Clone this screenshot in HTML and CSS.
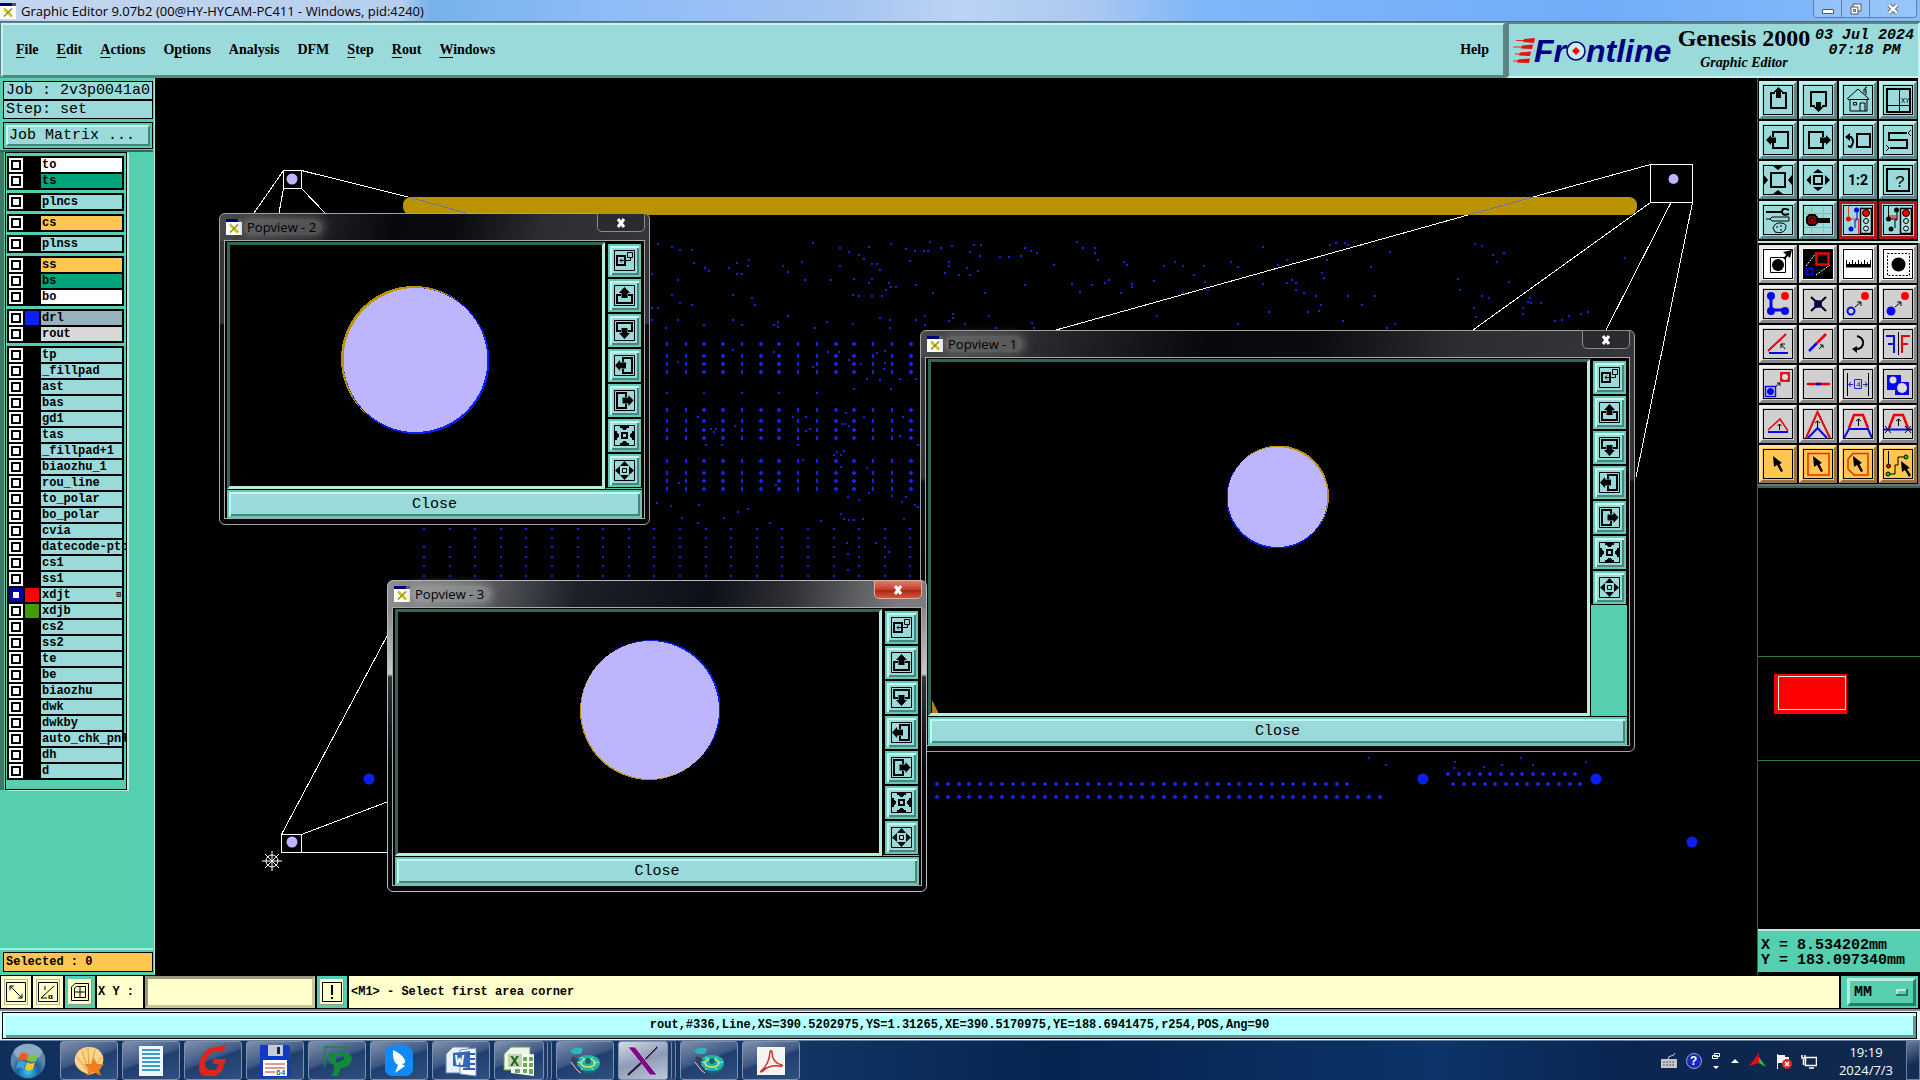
FILE: index.html
```html
<!DOCTYPE html>
<html lang="en">
<head>
    <meta charset="UTF-8">
    <meta name="viewport" content="width=device-width, initial-scale=1.0">
    <title>Graphic Editor</title>
    <link rel="stylesheet" href="styles.css">
</head>
<body>
    <!-- shared icons -->
    <svg class="sprite" aria-hidden="true">
        <symbol id="i-x11" viewBox="0 0 16 16">
            <path d="M0 0H16V16H0Z" fill="#fff"/><path d="M0 0H12V3H0Z" fill="#00007c"/><path d="M12 0H16V3H12Z" fill="#556"/>
            <path d="M4 5.500L12 13.500" stroke="#c9c400" stroke-width="2.500"/><path d="M12 5.500L4 13.500" stroke="#8c8a20" stroke-width="1.500"/>
        </symbol>
        <symbol id="p-link" viewBox="0 0 21 21">
            <path d="M.5 .5H20.500V20.500H.5Z" fill="none" stroke="#000"/>
            <path d="M3 6H11V15H3Z" fill="none" stroke="#000" stroke-width="2"/>
            <path d="M13.500 2.500H18.500V7.500H13.500ZM16.500 7.500V10.500H6M8 8.500L6 10.500L8 12.500" fill="none" stroke="#000"/>
        </symbol>
        <symbol id="p-up" viewBox="0 0 21 21">
            <path d="M.5 .5H20.500V20.500H.5Z" fill="none" stroke="#000"/>
            <path d="M7 10H3V18H18V10H14" fill="none" stroke="#000" stroke-width="2"/>
            <path d="M10.500 2L16 8H13.500V13H7.500V8H5Z"/>
        </symbol>
        <symbol id="p-down" viewBox="0 0 21 21">
            <path d="M.5 .5H20.500V20.500H.5Z" fill="none" stroke="#000"/>
            <path d="M7 11H3V3H18V11H14" fill="none" stroke="#000" stroke-width="2"/>
            <path d="M10.500 19L16 13H13.500V8H7.500V13H5Z"/>
        </symbol>
        <symbol id="p-left" viewBox="0 0 21 21">
            <path d="M.5 .5H20.500V20.500H.5Z" fill="none" stroke="#000"/>
            <path d="M9 7V3H18V18H9V14" fill="none" stroke="#000" stroke-width="2"/>
            <path d="M1 10.500L6 5V7.500H12V13.500H6V16Z"/>
        </symbol>
        <symbol id="p-right" viewBox="0 0 21 21">
            <path d="M.5 .5H20.500V20.500H.5Z" fill="none" stroke="#000"/>
            <path d="M12 7V3H3V18H12V14" fill="none" stroke="#000" stroke-width="2"/>
            <path d="M19.500 10.500L14.500 5V7.500H8.500V13.500H14.500V16Z"/>
        </symbol>
        <symbol id="p-in" viewBox="0 0 21 21">
            <path d="M.5 .5H20.500V20.500H.5Z" fill="none" stroke="#000"/>
            <path d="M8 8H13V13H8Z" fill="none" stroke="#000" stroke-width="2"/>
            <path d="M6 1H15V3H13V4H12V5H9V4H8V3H6ZM6 20H15V18H13V17H12V16H9V17H8V18H6ZM1 6V15H3V13H4V12H5V9H4V8H3V6ZM20 6V15H18V13H17V12H16V9H17V8H18V6Z"/>
        </symbol>
        <symbol id="p-out" viewBox="0 0 21 21">
            <path d="M.5 .5H20.500V20.500H.5Z" fill="none" stroke="#000"/>
            <path d="M8.500 8.500H12.500V12.500H8.500Z" fill="none" stroke="#000"/>
            <path d="M10.500 1L15 6H6ZM10.500 20L15 15H6ZM1 10.500L6 6V15ZM20 10.500L15 6V15Z"/>
        </symbol>
        <symbol id="t-cam" viewBox="0 0 32 32">
            <ellipse cx="19" cy="20" rx="12" ry="9" fill="#126a6c"/><ellipse cx="19" cy="18" rx="12" ry="8" fill="#1fb3ab"/>
            <path d="M1 6Q7 0 14 4L12 9H4Z" fill="#29b6bd"/><path d="M3 11L10 14L8 20L16 28L8 26L2 18Z" fill="#38405e"/>
            <path d="M2 17L8 25L12 28" stroke="#d8dce8" fill="none"/>
            <ellipse cx="19" cy="18" rx="7" ry="4" fill="none" stroke="#e8e060" stroke-width="1.500"/><ellipse cx="19" cy="16" rx="3" ry="3" fill="#0b6f70"/>
            <path d="M8 17L13 18M24 18L30 17M14 23L12 25M22 23L25 25M12 12L15 14M24 12L22 14" stroke="#8ff0e0"/>
        </symbol>
    </svg>

    <div class="titlebar">
        <svg class="app-icon"><use href="#i-x11"/></svg>
        <span class="title-text">Graphic Editor 9.07b2 (00@HY-HYCAM-PC411 - Windows, pid:4240)</span>
        <div class="win-buttons">
            <button aria-label="Minimize"><svg width="14" height="14"><path d="M1.500 7.500H12.500V11.500H1.500Z" fill="#fff" stroke="#556"/></svg></button>
            <button aria-label="Restore"><svg width="14" height="14"><path d="M4 2H12V9H4Z" fill="#fff" stroke="#556"/><path d="M2 5H9V12H2Z" fill="#fff" stroke="#556"/><path d="M4.500 7.500H6.500V9.500H4.500Z" stroke="#556" fill="none"/></svg></button>
            <button class="wide" aria-label="Close"><svg width="14" height="14"><path d="M3 3L11 11M11 3L3 11" stroke="#556" stroke-width="4.500"/><path d="M3 3L11 11M11 3L3 11" stroke="#fff" stroke-width="2.500"/></svg></button>
        </div>
    </div>

    <header class="header">
        <nav class="menubar">
            <a href="#"><u>F</u>ile</a>
            <a href="#"><u>E</u>dit</a>
            <a href="#"><u>A</u>ctions</a>
            <a href="#">O<u>p</u>tions</a>
            <a href="#">Analysis</a>
            <a href="#">DFM</a>
            <a href="#"><u>S</u>tep</a>
            <a href="#"><u>R</u>out</a>
            <a href="#"><u>W</u>indows</a>
            <a href="#" class="help">Help</a>
        </nav>
        <div class="brand">
            <div class="logo">
                <svg width="24" height="26" viewBox="0 0 24 26"><path d="M3 2.500H16M0 9H14M2 16H13M0 23H12" stroke="#e22" stroke-width="1"/><path d="M11 1L22 0L21 5L10 4ZM9 7.500L20 6.500L19 11L8 10.500ZM7 14.500L18 13.500L17 18L6 17.500ZM5 21.500L17 20.500L16 25L4 24.500Z" fill="#e81010"/></svg>
                <span class="logo-text">Fr<svg width="20" height="20" viewBox="0 0 20 20"><circle cx="10" cy="10" r="9" fill="#c8eef0" stroke="#000080" stroke-width="1.500"/><path d="M10 6L14 10L10 14L6 10Z" fill="#f00"/></svg>ntline</span>
            </div>
            <div class="product">
                <div class="product-name">Genesis 2000</div>
                <div class="product-sub">Graphic Editor</div>
            </div>
            <div class="clock">03 Jul 2024<br>07:18 PM</div>
        </div>
    </header>

    <main class="main">
        <aside class="sidebar">
            <div class="info">Job : 2v3p0041a0</div>
            <div class="info">Step: set</div>
            <div class="matrix"><button>Job Matrix ...</button></div>
            <div class="layer-panel">
                <div class="layers" id="layers"></div>
            </div>
            <div class="selected">Selected : 0</div>
        </aside>

        <section class="canvas">
            <svg class="scene" viewBox="155 78 1602 897" preserveAspectRatio="xMinYMin meet">
                <g id="drills" fill="#1322e4" shape-rendering="crispEdges"></g>
                <rect x="403" y="197" width="1234" height="18" rx="8" fill="#b99400"/>
                <g fill="none" stroke="#fff" shape-rendering="crispEdges">
                    <path d="M283.500 170.500H301.500V188.500H283.500ZM283.500 170.500L254 213M283.500 188.500L279 213M301.500 188.500L325 213M301.500 170.500L408 197"/>
                    <path d="M1650.500 164.500H1692.500V202.500H1650.500ZM1650.500 164.500L1533 197M1468 215L1056 330M1650.500 202.500L1473 330M1671 202.500L1606 330M1692.500 202.500L1636 477"/>
                    <path d="M281.500 834.500H301.500V852.500H281.500ZM281.500 834.500L387 636M301.500 834.500L387 802M301.500 852.500H387"/>
                    <path d="M408 197L466 213M1533 197L1468 215" stroke="#6d75a0"/>
                </g>
                <g fill="none" stroke="#fff"><circle cx="272" cy="861" r="6"/><path d="M262 861H282M272 851V871M265 854L279 868M279 854L265 868"/></g>
                <g fill="#bdb6ff"><circle cx="292" cy="179" r="5.500"/><circle cx="1673.500" cy="179" r="5"/><circle cx="292" cy="842" r="5.500"/></g>
                <g fill="#0a20f0"><circle cx="369" cy="779" r="5.500"/><circle cx="1423" cy="779" r="5.500"/><circle cx="1596" cy="779" r="5.500"/><circle cx="1692" cy="842" r="5.500"/></g>
            </svg>

            <div class="popview popview-1">
                <div class="pop-title"><svg class="app-icon"><use href="#i-x11"/></svg><span>Popview - 1</span><button class="pop-x" aria-label="Close window"><svg width="12" height="12"><path d="M3 2L9 10M9 2L3 10" stroke="#fff" stroke-width="3"/></svg></button></div>
                <div class="pop-body">
                    <svg class="view" shape-rendering="crispEdges"><circle cx="347.500" cy="134" r="50.500" fill="#b99400"/><circle cx="346" cy="136" r="50.500" fill="#0a20f0"/><circle cx="346.500" cy="135" r="50" fill="#bdb6ff"/><path d="M1 338L8 352H1Z" fill="#b07f10"/></svg>
                    <div class="pop-tools"></div>
                    <button class="pop-close">Close</button>
                </div>
            </div>

            <div class="popview popview-2">
                <div class="pop-title"><svg class="app-icon"><use href="#i-x11"/></svg><span>Popview - 2</span><button class="pop-x" aria-label="Close window"><svg width="12" height="12"><path d="M3 2L9 10M9 2L3 10" stroke="#fff" stroke-width="3"/></svg></button></div>
                <div class="pop-body">
                    <svg class="view" shape-rendering="crispEdges"><circle cx="184" cy="114" r="73" fill="#b99400"/><circle cx="186.500" cy="116" r="73" fill="#0a20f0"/><circle cx="185.500" cy="115" r="72" fill="#bdb6ff"/></svg>
                    <div class="pop-tools"></div>
                    <button class="pop-close">Close</button>
                </div>
            </div>

            <div class="popview popview-3">
                <div class="pop-title"><svg class="app-icon"><use href="#i-x11"/></svg><span>Popview - 3</span><button class="pop-x" aria-label="Close window"><svg width="12" height="12"><path d="M3 2L9 10M9 2L3 10" stroke="#fff" stroke-width="3"/></svg></button></div>
                <div class="pop-body">
                    <svg class="view" shape-rendering="crispEdges"><circle cx="251" cy="99" r="69" fill="#b99400"/><circle cx="253.500" cy="97" r="69" fill="#0a20f0"/><circle cx="252" cy="98" r="69" fill="#bdb6ff"/></svg>
                    <div class="pop-tools"></div>
                    <button class="pop-close">Close</button>
                </div>
            </div>
        </section>

        <aside class="tools">
            <div class="tool-grid view-tools">
                <button aria-label="Pan up"><svg viewBox="0 0 30 30"><path d="M12 8H8V23H23V8H19" class="s2"/><path d="M15.500 2L20.500 7H18V13H13V7H10.500Z"/></svg></button>
                <button aria-label="Pan down"><svg viewBox="0 0 30 30"><path d="M12 21H8V7H23V21H19" class="s2"/><path d="M15.500 27L20.500 22H18V17H13V22H10.500Z"/></svg></button>
                <button aria-label="Home"><svg viewBox="0 0 30 30"><path d="M4 14L15 4L26 14M7 14.500V26H24V14.500M5 14.500H26M10.500 17.500H13.500V20H10.500ZM17 26V18H22V26M21 8V4H23V10M22 3L24 2" class="s1"/></svg></button>
                <button aria-label="Coordinates"><svg viewBox="0 0 30 30"><path d="M4 4H27V27H4Z" class="s2"/><path d="M16.500 4V27M4 20.500H27" class="s1"/><text x="18" y="18" font-size="7">XY</text></svg></button>
                <button aria-label="Pan left"><svg viewBox="0 0 30 30"><path d="M10 12V7H25V23H10V18" class="s2"/><path d="M3 15L8 10V12.500H13V18H8V20Z"/></svg></button>
                <button aria-label="Pan right"><svg viewBox="0 0 30 30"><path d="M20 12V7H6V23H20V18" class="s2"/><path d="M28 15L23 10V12.500H17V18H23V20Z"/></svg></button>
                <button aria-label="Previous view"><svg viewBox="0 0 30 30"><path d="M14 9H27V22H14ZM5 12H8Q12 16 8 22L5 21" class="s2"/><path d="M2 12L7 8V16Z"/></svg></button>
                <button aria-label="Serpentine"><svg viewBox="0 0 30 30"><path d="M24 8H6V15H24V23H7" class="s2"/><path d="M28 5L25 8L28 11M3 20L6 23L3 26" class="s1"/></svg></button>
                <button aria-label="Zoom in"><svg viewBox="0 0 30 30"><path d="M8 8H22V22H8Z" class="s2"/><path d="M10 1H20L15 5ZM10 29H20L15 25ZM1 10V20L5 15ZM29 10V20L25 15Z"/></svg></button>
                <button aria-label="Zoom out"><svg viewBox="0 0 30 30"><path d="M11 11H19V19H11Z" class="s2"/><path d="M15 4L20 8H10ZM15 26L20 22H10ZM3.500 15L8 10V20ZM27 15L22 10V20Z"/></svg></button>
                <button aria-label="Scale 1 to 2"><svg viewBox="0 0 30 30"><text x="5" y="20" font-size="14" font-weight="bold" font-family="Roboto">1:2</text></svg></button>
                <button aria-label="Query"><svg viewBox="0 0 30 30"><path d="M4 4H26V26H4Z" class="s2"/><text x="12" y="22" font-size="17">?</text></svg></button>
                <button aria-label="Settings"><svg viewBox="0 0 30 30"><path d="M3 7H18M26 5Q19 2 19 7Q19 11 26 9" class="s2"/><path d="M3 14H7L9 12H26V16H9L7 14M10 23Q12 17 19 18Q25 19 22 25Q19 29 12 27ZM14 21V23M18 20V22M17 25H19" class="s1"/></svg></button>
                <button aria-label="Probe"><svg viewBox="0 0 30 30"><path d="M8.500 2V28M20.500 2V28M1 8.500H29M1 22.500H29" stroke="#c5a0a0"/><path d="M3 12L6 9H12L15 12V13H27V18H15L12 21H6L3 18Z"/><path d="M6 12H12V18H6Z" fill="none" stroke="#f00"/><path d="M8 14H10V16H8Z" fill="#f00"/></svg></button>
                <button class="alert" aria-label="Net check"><svg viewBox="0 0 30 30"><path d="M5.500 1V14H15.500V29" fill="none" stroke="#f03030"/><path d="M14 5V15H12V23" fill="none" stroke="#0000e0"/><circle cx="5.500" cy="14" r="2.500" fill="#e00"/><circle cx="13.500" cy="5" r="2.500" fill="#0000e8"/><circle cx="8" cy="24" r="2.500" fill="#0000e8"/><path d="M17.500 3.500H28.500V28.500H17.500Z" fill="#b8e0e0" stroke="#000" stroke-width="1.500"/><circle cx="23" cy="8" r="3.500" fill="#e00" stroke="#000"/><circle cx="23" cy="16" r="2.500" class="s1"/><circle cx="23" cy="23.500" r="2.500" class="s1"/></svg></button>
                <button class="alert" aria-label="Short check"><svg viewBox="0 0 30 30"><path d="M5.500 1V14M14 5V15H12V23M4 14H14" class="s1"/><path d="M7 14V10M9 14V10M11 14V10M13 14V10" stroke="#e00"/><circle cx="5.500" cy="14" r="2.500"/><circle cx="13.500" cy="5" r="2.500"/><circle cx="8" cy="24" r="2.500"/><path d="M17.500 3.500H28.500V28.500H17.500Z" fill="#b8e0e0" stroke="#000" stroke-width="1.500"/><circle cx="23" cy="8" r="3.500" fill="#e00" stroke="#000"/><circle cx="23" cy="16" r="2.500" class="s1"/><circle cx="23" cy="23.500" r="2.500" class="s1"/></svg></button>
            </div>
            <div class="tool-grid edit-tools">
                <button class="white" aria-label="Move pad"><svg viewBox="0 0 30 30"><path d="M7.500 8.500H22.500V23.500H7.500Z" class="s1"/><circle cx="15" cy="16" r="6"/><path d="M21 10L26 4" class="s2"/><path d="M20 3L29 1L27 9Z"/></svg></button>
                <button class="white" aria-label="Popview"><svg viewBox="0 0 30 30"><path d="M0 0H30V30H0Z"/><path d="M3 17L13 4M13 26L27 16" stroke="#fff" stroke-dasharray="2 1"/><path d="M13.500 4.500H25.500V15.500H13.500Z" fill="none" stroke="#e00" stroke-width="2.500"/><path d="M3.500 19.500H9.500V25.500H3.500Z" fill="none" stroke="#00e" stroke-width="2"/></svg></button>
                <button class="white" aria-label="Measure"><svg viewBox="0 0 30 30"><path d="M3 18.500H28V11H27V15H25V13H24V15H22V11H21V15H19V13H18V15H16V11H15V15H13V13H12V15H10V11H9V15H7V13H6V15H4V11H3Z"/></svg></button>
                <button class="white" aria-label="Select area"><svg viewBox="0 0 30 30"><path d="M4.500 4.500H26.500V26.500H4.500Z" class="s1" stroke-dasharray="2 1.500"/><circle cx="15.500" cy="15.500" r="7"/></svg></button>

                <button aria-label="Connect"><svg viewBox="0 0 30 30"><path d="M8 7V21H22" fill="none" stroke="#0808f0" stroke-width="3"/><circle cx="8" cy="7" r="4" fill="#0808f0"/><circle cx="8" cy="22" r="4" fill="#0808f0"/><circle cx="22" cy="22" r="4" fill="#0808f0"/><circle cx="22" cy="7" r="4" fill="#f00"/></svg></button>
                <button aria-label="Delete"><svg viewBox="0 0 30 30"><circle cx="15" cy="15" r="4" fill="#0808c0"/><path d="M8 8L23 22M23 8L8 22" class="s2"/></svg></button>
                <button aria-label="Move hollow"><svg viewBox="0 0 30 30"><circle cx="8" cy="22" r="3.500" fill="none" stroke="#0808f0" stroke-width="2"/><circle cx="22" cy="7" r="4" fill="#f00"/><path d="M12 18L18 13M14 13H18V17" class="s1"/></svg></button>
                <button aria-label="Move"><svg viewBox="0 0 30 30"><circle cx="8" cy="22" r="4.500" fill="#0808f0"/><circle cx="22" cy="7" r="4" fill="#f00"/><path d="M12 18L18 13M14 13H18V17" class="s1"/></svg></button>

                <button aria-label="Angle"><svg viewBox="0 0 30 30"><path d="M5 22L23 5" stroke="#e00" stroke-width="2"/><path d="M6 24H25" stroke="#0808f0" stroke-width="2"/><path d="M22 20L18 15M18 19V15H22" class="s1"/></svg></button>
                <button aria-label="Split"><svg viewBox="0 0 30 30"><path d="M6 22L14 14" stroke="#0808f0" stroke-width="2.500"/><path d="M14 14L23 5" stroke="#e00" stroke-width="2.500"/><path d="M16 20L20 16M17 16H20V19" class="s1"/></svg></button>
                <button aria-label="Rotate"><svg viewBox="0 0 30 30"><path d="M14 7Q21 9 20 15Q19 20 13 20" class="s2"/><path d="M9 20L14 17V24Z"/></svg></button>
                <button aria-label="Mirror"><svg viewBox="0 0 30 30"><path d="M3 7H11V24M5 15H11" fill="none" stroke="#0808f0" stroke-width="2"/><path d="M27 7H19V24M25 15H19" fill="none" stroke="#e00" stroke-width="2"/><path d="M15.500 3V26" class="s1"/></svg></button>

                <button aria-label="Copy pad"><svg viewBox="0 0 30 30"><path d="M2.500 17.500H12.500V27.500H2.500Z" fill="none" stroke="#0808f0" stroke-width="1.500"/><circle cx="7.500" cy="22.500" r="3.500" fill="#0808f0"/><path d="M17 3H27V13H17Z" fill="#f01010"/><circle cx="22" cy="8" r="3" fill="#ddd"/><path d="M12 18L17 14M14 14H17V17" class="s1"/></svg></button>
                <button aria-label="Join"><svg viewBox="0 0 30 30"><path d="M5 15H26" stroke="#e00" stroke-width="2.500" stroke-linecap="round"/><path d="M13 15H18" stroke="#0808c0" stroke-width="2.500"/></svg></button>
                <button aria-label="Spacing"><svg viewBox="0 0 30 30"><path d="M4.500 4V27M25.500 4V27" class="s1"/><path d="M6 15.500H10M20 15.500H24M8 13L5.500 15.500L8 18M22 13L24.500 15.500L22 18M11.500 10.500H18.500V19.500H11.500Z" fill="none" stroke="#2020d0"/><text x="13" y="18" font-size="8" fill="#2020d0">4</text></svg></button>
                <button aria-label="Merge"><svg viewBox="0 0 30 30"><path d="M4 6H18V13H26V26H12V21H4Z" fill="#0808f0"/><circle cx="10" cy="11" r="3.500" fill="#ddd"/><circle cx="19" cy="19" r="5" fill="#ddd"/></svg></button>

                <button aria-label="Chamfer"><svg viewBox="0 0 30 30"><path d="M5 21L17 10L25 22" fill="none" stroke="#e00" stroke-width="1.500"/><path d="M5 23H25" stroke="#0808f0" stroke-width="2"/><path d="M16.500 21V15M14.500 17L16.500 15L18.500 17" class="s1"/></svg></button>
                <button aria-label="Stretch corner"><svg viewBox="0 0 30 30"><path d="M3 29L14.500 3L27 29" fill="none" stroke="#e00" stroke-width="2"/><path d="M5 29L14.500 19L24 29" fill="none" stroke="#0808f0" stroke-width="2"/><path d="M14.500 18V12M12 14L14.500 12L17 14" class="s1"/></svg></button>
                <button aria-label="Stretch side"><svg viewBox="0 0 30 30"><path d="M6 19L11 6H20L25 19" fill="none" stroke="#e00" stroke-width="2.500"/><path d="M1 29L6 20H25L29 29" fill="none" stroke="#0808f0" stroke-width="2"/><path d="M15.500 17V10M13 12L15.500 10L18 12" class="s1"/></svg></button>
                <button aria-label="Slide side"><svg viewBox="0 0 30 30"><path d="M6 19L11 6H20L25 19" fill="none" stroke="#e00" stroke-width="2.500"/><path d="M1 20.500H29" stroke="#0808f0" stroke-width="2"/><path d="M15.500 17V10M13 12L15.500 10L18 12M2 17L8 24M8 17L2 24M22 17L28 24M28 17L22 24" class="s1"/></svg></button>

                <button class="orange" aria-label="Select"><svg viewBox="0 0 30 30"><path d="M10 7L19 14L16.500 15L20 22L18 23L14 16L11 18Z"/></svg></button>
                <button class="orange" aria-label="Select in box"><svg viewBox="0 0 30 30"><path d="M5 4.500H26V26H5Z" fill="none" stroke="#f02a00" stroke-width="1.500"/><path d="M10 7L19 14L16.500 15L20 22L18 23L14 16L11 18Z"/></svg></button>
                <button class="orange" aria-label="Select in polygon"><svg viewBox="0 0 30 30"><path d="M10 4.500H25V26H11L5 20V10Z" fill="none" stroke="#f02a00" stroke-width="1.500"/><path d="M10 7L19 14L16.500 15L20 22L18 23L14 16L11 18Z"/></svg></button>
                <button class="orange" aria-label="Select net"><svg viewBox="0 0 30 30"><path d="M5.500 2V17M5 25H12V16H15V8H23" class="s1"/><circle cx="5.500" cy="17" r="2" fill="#c22000" stroke="#000"/><circle cx="5" cy="25" r="2" fill="#20d020" stroke="#000"/><circle cx="23" cy="8" r="2" fill="#20d020" stroke="#000"/><path d="M18 12L27 19L24 20L28 26L26 28L22 21L19 23Z"/></svg></button>
            </div>
            <div class="overview">
                <div class="overview-frame">
                    <svg width="80" height="60"><path d="M3 5H76V45H3Z" fill="#f00"/><path d="M7.500 7.500H74.500V40.500H7.500Z" fill="none" stroke="#c8f4f0"/></svg>
                </div>
            </div>
            <div class="coords">X = 8.534202mm<br>Y = 183.097340mm</div>
        </aside>
    </main>

    <div class="command">
        <button aria-label="Absolute"><svg width="20" height="20"><path d="M.5 .5H19.500V19.500H.5ZM4 4L16 16M4 8V4H8M12 16H16V12" class="s1"/></svg></button>
        <button aria-label="Angle lock"><svg width="20" height="20"><path d="M.5 .5H19.500V19.500H.5ZM3 16L16 4M3 16H9M7 4V8" class="s1"/><text x="10" y="17" font-size="8">α</text></svg></button>
        <button class="teal" aria-label="Grid"><svg width="20" height="20"><path d="M1.500 5L5 1.500H18.500V18.500H1.500ZM4.500 6L6.500 4.500H15.500V15.500H4.500ZM10 4V16M4 10H16" class="s1"/></svg></button>
        <label for="xy">X Y :</label>
        <input id="xy" type="text">
        <button class="teal" aria-label="Apply"><svg width="20" height="20"><path d="M.5 .5H19.500V19.500H.5Z" class="s1"/><path d="M10 3V13M10 15V17" class="s2"/></svg></button>
        <div class="message">&lt;M1&gt; - Select first area corner</div>
        <div class="units"><select aria-label="Units"><option>MM</option><option>INCH</option></select></div>
    </div>

    <div class="status"><div class="status-text">rout,#336,Line,XS=390.5202975,YS=1.31265,XE=390.5170975,YE=188.6941475,r254,POS,Ang=90</div></div>

    <footer class="taskbar">
        <button class="start" aria-label="Start"><svg width="38" height="38" viewBox="0 0 38 38"><defs><radialGradient id="orb" cx=".5" cy=".8"><stop offset="0" stop-color="#39c7f5"/><stop offset=".6" stop-color="#1c5f9c"/><stop offset="1" stop-color="#5b87a8"/></radialGradient></defs><circle cx="19" cy="19" r="18" fill="url(#orb)" stroke="#0a2848"/><ellipse cx="19" cy="10" rx="14" ry="8" fill="#fff" opacity=".3"/><path d="M11 12Q15 9 19 12L17 19Q13 16 9 19Z" fill="#ee5a28"/><path d="M20 12Q24 15 29 12L27 19Q23 21 18 19Z" fill="#7cc142"/><path d="M9 20Q13 17 17 20L15 27Q11 24 7 27Z" fill="#38a2e0"/><path d="M18 20Q22 23 26 20L24 27Q20 30 16 27Z" fill="#fcc81f"/></svg></button>
        <button class="task" aria-label="Shell"><svg viewBox="0 0 32 32"><path d="M16 30L8 26Q0 20 2 12Q5 3 14 2Q26 1 30 11Q32 20 24 27Z" fill="#fbd48a"/><path d="M16 28L4 12M16 28L9 6M16 28L15 3M16 28L22 5M16 28L29 12" stroke="#e0a040"/><path d="M21 13L24 19L31 19L26 24L28 31L21 27L14 31L16 24L11 19L18 19Z" fill="#ee7d1c"/></svg></button>
        <button class="task" aria-label="Notepad"><svg viewBox="0 0 32 32"><path d="M4 1H28V31H4Z" fill="#eef8fc"/><path d="M7 5H25M7 9H25M7 13H25M7 17H25M7 21H25M7 25H25" stroke="#3a9bc8" stroke-width="2"/></svg></button>
        <button class="task" aria-label="Gerber tool"><svg viewBox="0 0 32 32"><path d="M29 0L26 7H16Q9 11 8 19Q8 25 14 25H19L22 19H15L17 14H29L25 26L19 31H8Q2 30 2 23Q3 8 13 3Z" fill="#e02418"/></svg></button>
        <button class="task" aria-label="Total Commander"><svg viewBox="0 0 32 32"><path d="M1 0H29L31 2V32H1Z" fill="#1238c8"/><path d="M9 0H24V11H9Z" fill="#c4ccd8"/><path d="M18 2H21V9H18Z" fill="#223"/><path d="M4 15H28V31H4Z" fill="#fff"/><path d="M6 19H26M6 23H26M6 27H16" stroke="#c03030"/><text x="17" y="30" font-size="8" fill="#222">64</text></svg></button>
        <button class="task" aria-label="Pads"><svg viewBox="0 0 32 32"><path d="M4 22V2H25V6" fill="none" stroke="#118a3c" stroke-width="1.500"/><path d="M8 18V8Q30 5 31 13Q31 22 20 23L17 31H10Q14 26 13 20ZM15 11V17Q24 16 23 12Q21 10 15 11Z" fill="#118a3c" fill-rule="evenodd"/></svg></button>
        <button class="task" aria-label="Dingtalk"><svg viewBox="0 0 32 32"><rect x="2" y="1" width="28" height="30" rx="7" fill="#118af5"/><path d="M10 5Q23 11 22 18L19 19L22 21L12 28L15 20Q9 17 10 5Z" fill="#fff"/></svg></button>
        <button class="task" aria-label="Word"><svg viewBox="0 0 32 32"><path d="M8 2H24V28H1V9Z" fill="#e9f0fb" stroke="#5884c0"/><path d="M15 5L31 3V31L15 29Z" fill="#fff" stroke="#7090c0"/><path d="M25 9H30M25 14H30M25 19H30M18 24H30" stroke="#2f60a8" stroke-width="2"/><path d="M8 8L25 6V23L8 21Z" fill="#3565b4"/><text x="10" y="20" font-size="15" font-weight="bold" fill="#fff">W</text></svg></button>
        <button class="task stacked" aria-label="Excel"><svg viewBox="0 0 32 32"><path d="M8 2H27V25H1V9Z" fill="#edf6e8" stroke="#5c9c4a"/><path d="M8 11L31 9V31L8 28Z" fill="#fff"/><path d="M20 12H24V16H20ZM26 12H30V16H26ZM20 18H24V22H20ZM26 18H30V22H26ZM12 24H17V28H12ZM20 24H24V28H20ZM26 24H30V29H26Z" fill="#6cab50"/><path d="M5 9H19V22H5Z" fill="#b9d9a8"/><text x="7" y="21" font-size="15" font-weight="bold" fill="#205c20">X</text></svg></button>
        <button class="task" aria-label="Genesis"><svg viewBox="0 0 32 32"><use href="#t-cam"/></svg></button>
        <button class="task stacked active" aria-label="X server"><svg viewBox="0 0 32 32"><path d="M1 2H8L30 30H23Z" fill="#7d0a84" stroke="#fff" stroke-width=".5"/><path d="M30 2L18 14M14 18L1 30" stroke="#2a1030" stroke-width="2"/><path d="M29 2L17 14" stroke="#fff" stroke-width=".7"/></svg></button>
        <button class="task" aria-label="Genesis"><svg viewBox="0 0 32 32"><use href="#t-cam"/></svg></button>
        <button class="task" aria-label="Acrobat"><svg viewBox="0 0 32 32"><path d="M2 2H30V30H2Z" fill="#f6f4f2"/><path d="M6 26Q14 20 15 7Q16 4 17 7Q17 18 27 20Q28 22 24 21Q14 20 8 26Q5 28 6 26Z" fill="none" stroke="#d0302a" stroke-width="1.500"/></svg></button>

        <div class="tray">
            <svg width="16" height="16"><path d="M0 6H16V15H0Z" fill="#c4c8cc"/><path d="M2 9H14M2 12H14" stroke="#556" stroke-dasharray="2 1"/><path d="M7 6Q7 3 10 3Q13 3 14 0" fill="none" stroke="#ccc"/></svg>
            <svg width="16" height="16"><circle cx="8" cy="8" r="7.500" fill="#1528b8" stroke="#9aa6c8"/><text x="4" y="12" font-size="12" font-weight="bold" fill="#fff">?</text></svg>
            <svg width="10" height="20"><path d="M3.500 2.500H8.500V5.500H3.500ZM1.500 4.500H6.500V7.500H1.500Z" fill="none" stroke="#fff"/><path d="M2 15H8L5 18Z" fill="#fff"/></svg>
            <svg width="10" height="16"><path d="M1 10H9L5 6Z" fill="#fff"/></svg>
            <svg width="18" height="16"><path d="M0 13L10 0V10Z" fill="#e01010"/><path d="M10 4L17 14L10 10Z" fill="#20c040"/></svg>
            <svg width="16" height="16"><path d="M1.500 1V16" stroke="#fff"/><path d="M2 2H9V4H13V10H2Z" fill="#f4f4f4"/><circle cx="11" cy="11" r="5" fill="#e02828"/><path d="M9 9L13 13M13 9L9 13" stroke="#fff" stroke-width="1.500"/></svg>
            <svg width="16" height="16"><path d="M4.500 4.500H15.500V12.500H4.500ZM8 15H13M1 2V5H4V2M2.500 6V12" fill="none" stroke="#fff" stroke-width="1.500"/></svg>
            <div class="tray-clock">19:19<br>2024/7/3</div>
        </div>
        <button class="show-desktop" aria-label="Show desktop"></button>
    </footer>

    <script src="script.js"></script>
</body>
</html>
```

FILE: styles.css
```css
* {
    box-sizing: border-box;
}
body {
    margin: 0;
    min-height: 100vh;
    display: flex;
    flex-direction: column;
    background: #000;
    color: #000;
    font-family: "Liberation Mono", monospace;
    overflow: hidden;
}
button {
    padding: 0;
    margin: 0;
    color: inherit;
    font: inherit;
}
svg {
    display: block;
}
.sprite {
    position: absolute;
    width: 0;
    height: 0;
}
.s1 {
    fill: none;
    stroke: #000;
}
.s2 {
    fill: none;
    stroke: #000;
    stroke-width: 2;
}
.app-icon {
    width: 16px;
    height: 16px;
    flex: none;
}

/* window title */
.titlebar {
    height: 22px;
    display: flex;
    align-items: center;
    gap: 5px;
    border-bottom: 1px solid #4e6c80;
    background:
        radial-gradient(ellipse at 440px 12px, #3f9a9a 0, transparent 14px),
        radial-gradient(ellipse at 480px 12px, #55a0b0 0, transparent 14px),
        radial-gradient(ellipse at 530px 12px, #7ab4d0 0, transparent 12px),
        linear-gradient(90deg, #c3d6ee 0, #b6cfee 400px, #78b2ea 430px, #8fbcf8 620px, #a3c4f0 840px, #bcd4f4 960px, #aac8f0 1090px, #7fb6f8 1200px, #6fadf8 1600px, #88bcf8 100%);
    font: 13px/18px "Open Sans", sans-serif;
}
.win-buttons {
    margin-left: auto;
    margin-right: 3px;
    align-self: flex-start;
    display: flex;
    height: 18px;
    border: 1px solid #5a7fae;
    border-top: 0;
    border-radius: 0 0 4px 4px;
}
.win-buttons button {
    width: 28px;
    border: 0;
    border-right: 1px solid #5a7fae;
    background: rgba(255, 255, 255, 0.15);
    display: grid;
    place-items: center;
}
.win-buttons .wide {
    width: 46px;
    border-right: 0;
}

/* menu and brand */
.header {
    height: 56px;
    display: flex;
    background: #9adada;
}
.menubar {
    flex: 1;
    display: flex;
    align-items: center;
    gap: 18px;
    padding: 0 14px 0 13px;
    border: 3px solid;
    border-color: #c8f0f0 #5c8484 #5c8484 #c8f0f0;
    outline: 1px solid #5c8484;
    outline-offset: -1px;
    font: bold 14px "Liberation Serif", serif;
}
.menubar a {
    color: #000;
    text-decoration: none;
}
.menubar u {
    text-underline-offset: 3px;
}
.menubar .help {
    margin-left: auto;
}
.brand {
    width: 414px;
    display: flex;
    padding: 1px 2px 0 4px;
    border: 2px solid;
    border-color: #5c8484 #c8f0f0 #c8f0f0 #5c8484;
    border-left: 3px solid #5c8484;
}
.logo {
    display: flex;
    align-items: center;
    width: 160px;
}
.logo-text {
    display: flex;
    align-items: center;
    margin-left: -3px;
    color: #000080;
    font: italic bold 32px/32px "Liberation Sans", sans-serif;
}
.product {
    width: 142px;
    text-align: center;
    white-space: nowrap;
}
.product-name {
    font: bold 24px/26px "Liberation Serif", serif;
}
.product-sub {
    font: italic bold 14px/24px "Liberation Serif", serif;
}
.clock {
    font: italic bold 15px/15px "Liberation Mono", monospace;
    padding-top: 3px;
    text-align: center;
    white-space: nowrap;
}

.main {
    flex: 1;
    display: flex;
}

/* left column */
.sidebar {
    width: 155px;
    display: flex;
    flex-direction: column;
    padding: 3px 1px 3px 3px;
    background: #55cfb0;
    border-right: 1px solid #9eeedd;
    font-size: 15px;
}
.info {
    height: 19px;
    padding-left: 2px;
    line-height: 18px;
    border: 1px solid #000;
    background: #9adada;
    white-space: nowrap;
}
.matrix {
    margin: 3px 0 1px;
    padding: 2px;
    border: 1px solid #000;
}
.matrix button {
    width: 100%;
    height: 21px;
    padding-left: 1px;
    text-align: left;
    line-height: 17px;
    background: #9adada;
    border: 2px solid;
    border-color: #c8f4f0 #4f8080 #4f8080 #c8f4f0;
}
.layer-panel {
    flex: 1;
    margin-left: -3px;
    padding-left: 5px;
    border-top: 2px solid #2f6858;
    border-bottom: 2px solid #9eeedd;
    background: linear-gradient(90deg, #3f7868 4px, transparent 4px) 0 0 / 5px 638px no-repeat;
}
.layers {
    width: 122px;
    display: flex;
    flex-direction: column;
    gap: 3px;
    padding: 3px 2px 9px 1px;
    border: 1px solid #000;
    box-shadow: 2px 1px 0 #b5eedd;
    overflow: hidden;
}
.layer-group {
    display: flex;
    flex-direction: column;
    gap: 2px;
    padding: 2px;
    background: #000;
}
.layer {
    height: 14px;
    display: flex;
    gap: 2px;
}
.layer input {
    appearance: none;
    flex: none;
    width: 14px;
    height: 14px;
    margin: 0;
    border: 2px solid #fff;
    background: linear-gradient(#fff, #fff) center / 6px 6px no-repeat #000;
}
.layer input:checked {
    border-color: #0000a8;
    background-color: #0000a8;
}
.swatch {
    flex: none;
    width: 14px;
}
.layer-name {
    flex: 1;
    min-width: 0;
    padding-left: 1px;
    background: #9adada;
    font-size: 12px;
    font-weight: bold;
    line-height: 14px;
    white-space: nowrap;
}
.layer-name.white { background: #fff; }
.layer-name.green { background: #00a57c; }
.layer-name.orange { background: #ffc752; }
.layer-name.slate { background: #98b2bc; }
.layer-name.grey { background: #d8d8d8; }
.layer-name.marked {
    display: flex;
    justify-content: space-between;
    padding-right: 1px;
}
.layer-name.marked::after {
    content: "⊞";
    font-size: 8px;
}
.selected {
    height: 20px;
    margin-top: 2px;
    padding-left: 2px;
    border: 1px solid #000;
    background: #ffc752;
    font-size: 12px;
    font-weight: bold;
    line-height: 18px;
}

/* drawing area */
.canvas {
    position: relative;
    flex: 1;
    min-width: 0;
    background: #000;
    overflow: hidden;
}
.scene {
    width: 100%;
    height: 100%;
}
.popview {
    position: absolute;
    display: flex;
    flex-direction: column;
    padding: 0 4px 5px;
    border: 1px solid #a0a2a4;
    border-radius: 6px;
    background: linear-gradient(100deg, #4a4b4d 0, #26282b 18%, #08090c 40%, #0a0b0e 55%, #2c2d30 75%, #36373a 100%) 0 0 / 100% 27px no-repeat, linear-gradient(#36373a, #303235 35%, #0b0d11 36%, #05060a);
}
.popview-1 {
    left: 765px;
    top: 252px;
    width: 715px;
    height: 422px;
}
.popview-2 {
    left: 64px;
    top: 135px;
    width: 431px;
    height: 312px;
}
.popview-3 {
    left: 232px;
    top: 502px;
    width: 540px;
    height: 312px;
    border-color: #b8babc;
    background: linear-gradient(100deg, #8d8f91 0, #707274 12%, #1d2028 35%, #0d1018 60%, #303236 75%, #7b7d80 95%) 0 0 / 100% 27px no-repeat, linear-gradient(#6c6e70, #c8cacc 30%, #30343a 31%, #06080c 60%);
}
.pop-title {
    display: flex;
    align-items: center;
    gap: 2px;
    height: 26px;
    padding: 0 0 0 2px;
    font: 13px/16px "Open Sans", sans-serif;
}
.pop-title span {
    padding: 0 6px 0 3px;
    border-radius: 8px;
    background: rgba(130, 130, 130, 0.5);
    box-shadow: 0 0 8px 3px rgba(130, 130, 130, 0.5);
}
.popview-3 .pop-title span {
    background: rgba(170, 170, 170, 0.5);
    box-shadow: 0 0 8px 3px rgba(170, 170, 170, 0.5);
}
.pop-x {
    align-self: flex-start;
    display: grid;
    place-items: center;
    width: 48px;
    height: 19px;
    margin: -1px 0 0 auto;
    border: 1px solid #8c8e90;
    border-radius: 0 0 5px 5px;
    background: #292b2e;
}
.popview-3 .pop-x {
    background: linear-gradient(#d8806c, #c4402c 50%, #a82414 52%, #d0583c);
    border-color: #e0b0a0;
}
.pop-body {
    flex: 1;
    min-height: 0;
    display: grid;
    grid-template: 1fr 28px / 1fr 36px;
    gap: 1px 1px;
    padding: 1px 2px 0;
    border: 1px solid #a8aaac;
    background: #000;
}
.view {
    width: 100%;
    height: 100%;
    min-height: 0;
    border: 3px solid;
    border-color: #2f6858 #b5eedd #b5eedd #2f6858;
    background: #000;
}
.pop-tools {
    display: flex;
    flex-direction: column;
    gap: 2px;
    padding: 2px 1px 0 2px;
    background: linear-gradient(#000 246px, #55cfb0 246px);
}
.pop-tools button {
    width: 33px;
    height: 33px;
    display: grid;
    place-items: center;
    border: 2px solid #66c8b0;
    background: #9adada;
    box-shadow: inset 2px 2px 0 #c0f8f4, inset -2px -2px 0 #4a8480;
}
.pop-tools svg {
    width: 21px;
    height: 21px;
}
.pop-close {
    grid-column: 1 / 3;
    border: 2px solid #66c8b0;
    background: #9adada;
    box-shadow: inset 2px 2px 0 #c0f8f4, inset -2px -2px 0 #4a8480;
    font-size: 15px;
}

/* right column */
.tools {
    width: 163px;
    display: flex;
    flex-direction: column;
    border-left: 1px solid #2f6858;
}
.tool-grid {
    display: grid;
    grid-template-columns: repeat(4, 38px);
    gap: 2px;
    padding: 3px 2px 2px 1px;
    border-right: 2px solid #c8f4f0;
}
.view-tools {
    border-bottom: 2px solid #b5eedd;
}
.edit-tools {
    padding: 2px 2px 1px 1px;
    border-right-color: #707070;
    border-bottom: 2px solid #707070;
}
.tool-grid button {
    height: 38px;
    display: grid;
    place-items: center;
    background: #9adada;
    border: 3px solid;
    border-color: #c0f0ee #5b8888 #5b8888 #c0f0ee;
}
.tool-grid svg {
    width: 30px;
    height: 30px;
    outline: 1px solid #000;
    outline-offset: -1px;
}
.tool-grid .alert {
    border-color: #b01820;
}
.edit-tools button {
    background: #d0d0d0;
    border-color: #efefef #888 #888 #efefef;
}
.edit-tools .white {
    background: #fff;
    border-color: #e8e8e8 #999 #999 #e8e8e8;
}
.edit-tools .orange {
    background: #ffc752;
    border-color: #ffe2a2 #967840 #967840 #ffe2a2;
}
.overview {
    flex: 1;
    display: flex;
    align-items: center;
    border-top: 2px solid #2f6858;
    background: #000;
}
.overview-frame {
    width: 100%;
    height: 105px;
    padding: 12px 0 0 13px;
    border: 1px solid #2f7d3c;
    border-width: 1px 0;
}
.coords {
    height: 46px;
    padding: 7px 0 0 3px;
    border-top: 2px solid #b5eedd;
    border-bottom: 3px solid #000;
    background: #55cfb0;
    font-size: 15px;
    font-weight: bold;
    line-height: 15px;
    white-space: nowrap;
}

/* command line */
.command {
    height: 34px;
    display: flex;
    gap: 2px;
    padding: 1px 2px 1px 1px;
    background: #000;
    font-size: 12px;
    font-weight: bold;
}
.command button {
    width: 30px;
    display: grid;
    place-items: center;
    border: 3px solid #ffffcc;
    background: #ffffcc;
    box-shadow: inset 0 0 0 1px #b8b896;
}
.command .teal {
    border-color: #55cfb0;
    box-shadow: inset -1px -1px 0 #a09878;
}
.command label {
    width: 46px;
    padding-left: 1px;
    line-height: 32px;
    background: #ffffcc;
    white-space: nowrap;
}
.command input {
    width: 170px;
    padding: 0 6px;
    border: 3px solid;
    border-color: #9a9a80 #c8c8a0 #c8c8a0 #9a9a80;
    background: #ffffcc;
    font: inherit;
}
.message {
    flex: 1;
    padding-left: 2px;
    line-height: 32px;
    background: #ffffcc;
}
.units {
    width: 77px;
    padding: 2px;
    padding-left: 6px;
    background: #55cfb0;
}
.units select {
    appearance: none;
    width: 100%;
    height: 28px;
    padding: 0 4px;
    border: 3px solid;
    border-color: #b5eedd #2f7868 #2f7868 #b5eedd;
    border-radius: 0;
    background:
        linear-gradient(#55cfb0, #55cfb0) 48px 10px / 8px 3px no-repeat,
        linear-gradient(#b5eedd, #b5eedd) 46px 8px / 10px 5px no-repeat,
        linear-gradient(#2f7868, #2f7868) 46px 8px / 12px 7px no-repeat,
        #55cfb0;
    color: #000;
    font: bold 15px "Liberation Mono", monospace;
}
.status {
    height: 31px;
    padding: 1px 3px 1px 2px;
    border: 2px solid #78908f;
    border-width: 2px 0 0;
    background: #d8ffff;
}
.status-text {
    height: 27px;
    border: 1px solid #000;
    background: #b4ffff;
    box-shadow: inset 3px 3px 0 #d8ffff, inset -3px -3px 0 #609898;
    font-size: 12px;
    font-weight: bold;
    line-height: 24px;
    text-align: center;
}

/* windows taskbar */
.taskbar {
    height: 40px;
    display: flex;
    align-items: stretch;
    gap: 4px;
    border-top: 1px solid #6880a0;
    background: linear-gradient(90deg, #10305c, #123766 40%, #062450 55%, #0c3468 75%, #0a2550 85%, #12294c);
}
.start {
    width: 56px;
    display: grid;
    place-items: center;
    border: 0;
    background: none;
}
.task {
    width: 58px;
    display: grid;
    place-items: center;
    border: 1px solid #8090b0;
    border-radius: 3px;
    background: linear-gradient(160deg, #8090ac 0, #3d5884 45%, #203f70 50%, #30507f);
}
.task svg {
    width: 32px;
    height: 32px;
}
.task.stacked {
    width: 50px;
    margin-right: 8px;
    box-shadow: 3px 0 0 #203a66, 4px 0 0 #7888a8, 7px 0 0 #203a66, 8px 0 0 #7888a8;
}
.task.active {
    background: linear-gradient(160deg, #d4dae4, #8c9cb8 50%, #c0c8d8);
}
.tray {
    margin-left: auto;
    display: flex;
    align-items: center;
    gap: 9px;
}
.tray-clock {
    width: 72px;
    margin-left: 4px;
    color: #fff;
    font: 13px/18px "Open Sans", sans-serif;
    text-align: center;
}
.show-desktop {
    width: 14px;
    border: 1px solid #6c80a0;
    background: linear-gradient(160deg, #6878a0, #152c54 60%);
}
```

FILE: script.js
```js
// layer list: [name, background class, swatch colour, checked]
const layerGroups = [
    [['to', 'white'], ['ts', 'green']],
    [['plncs']],
    [['cs', 'orange']],
    [['plnss']],
    [['ss', 'orange'], ['bs', 'green'], ['bo', 'white']],
    [['drl', 'slate', '#0a20ff'], ['rout', 'grey']],
    [['tp'], ['_fillpad'], ['ast'], ['bas'], ['gd1'], ['tas'], ['_fillpad+1'], ['biaozhu_1'],
     ['rou_line'], ['to_polar'], ['bo_polar'], ['cvia'], ['datecode-pto'], ['cs1'], ['ss1'],
     ['xdjt', 'marked', '#ff0000', true], ['xdjb', '', '#459a00'], ['cs2'], ['ss2'], ['te'], ['be'],
     ['biaozhu'], ['dwk'], ['dwkby'], ['auto_chk_pnl'], ['dh'], ['d']]
];

document.getElementById('layers').innerHTML = layerGroups.map(group =>
    '<div class="layer-group">' + group.map(([name, cls = '', color = '#000', on]) =>
        `<label class="layer"><input type="checkbox"${on ? ' checked' : ''}>` +
        `<span class="swatch" style="background:${color}"></span>` +
        `<span class="layer-name ${cls}">${name}</span></label>`
    ).join('') + '</div>'
).join('');

// every popview has the same seven view buttons
const popTools = ['link', 'up', 'down', 'left', 'right', 'in', 'out'];
document.querySelectorAll('.pop-tools').forEach(box => {
    box.innerHTML = popTools.map(t => `<button aria-label="${t}"><svg><use href="#p-${t}"/></svg></button>`).join('');
});

// drill hits
let hits = '';
function hit(x, y, size = 2) {
    x = Math.round(x);
    y = Math.round(y);
    hits += `<rect x="${x - 1}" y="${y - 1}" width="2" height="2"/>`;
    if (size > 2) {
        hits += `<rect x="${x - 1}" y="${y - 2}" width="2" height="4"/>`;
    }
    if (size > 3) {
        hits += `<rect x="${x - 2}" y="${y - 1}" width="4" height="2"/>`;
    }
}

// component rows
const wide = [2, 3, 5, 6, 9, 10, 13];
for (let c = 0; c < 14; c++) {
    [344, 356, 364, 372, 410, 421, 430, 438, 461, 473, 481, 489].forEach(y => {
        hit(667 + c * 18.74, y, wide.includes(c) ? 4 : 3);
    });
}
[667, 704, 742, 779, 817].forEach(x => hit(x, 393));

// lower columns
for (let c = 0; c < 20; c++) {
    [529, 538, 547, 557, 566, 576].forEach(y => {
        if (y === 538 && c < 2) return;
        hit(424 + c * 25.6, y);
    });
}

// bottom edge
for (let x = 937; x < 1380; x += 10.8) {
    if (x < 1350) hit(x, 784, 4);
    hit(x, 797, 4);
}
for (let x = 1448; x < 1578; x += 10.6) {
    hit(x, 774, 4);
    hit(x + 5, 784, 4);
}

// loose vias, stored per block in plot units
const blocks = [
    { x: 400, y: 190, sx: 2.8, sy: 3, pts: [
        722,162, 761,171, 784,180, 818,180, 823,219, 854,234, 865,243, 921,234, 943,219, 943,252, 957,252, 974,228, 977,210,
        778,270, 761,315, 784,339, 817,345, 722,354, 705,252, 705,354, 705,390, 745,413, 778,390, 851,405, 933,315, 932,390,
        957,405, 986,324, 994,345, 1072,228, 1087,246, 1087,378, 1046,405, 1058,396, 1058,411, 1125,216, 1134,270, 1157,159,
        1207,270, 1232,174, 1257,186, 1232,228, 1285,195, 1299,207, 1313,171, 1321,222, 1335,222, 1344,240, 1271,267,
        1321,267, 1313,279, 1369,279, 1375,291, 1389,291, 1361,300, 1285,318, 1268,315, 1321,318, 1349,318, 1195,396,
        1162,413, 1268,402, 1344,384, 1372,390, 1372,413, 1375,162, 1417,177, 1442,183, 1467,183, 1479,183, 1484,156,
        1515,174, 1545,168, 1428,213, 1445,285, 1492,309, 1526,249, 1537,216, 1537,228, 1565,255, 1445,390, 1470,378,
        1470,405, 1548,372, 1548,384, 1537,393, 778,517, 1199,486, 1229,486, 1257,510, 1291,522, 1307,567, 1344,570,
        1358,519, 1355,537, 1335,489, 1358,483, 1400,567, 1445,567, 1157,531, 1046,486, 932,480, 1271,597, 1375,597,
        835,681, 871,717, 879,726, 885,717, 938,708, 1137,681, 1137,723, 1148,717, 1100,681, 1249,669, 1237,702, 1246,702,
        1257,708, 1299,681, 1408,681, 1400,738, 857,765, 901,765, 1114,765, 1450,765, 1223,786, 1243,783, 1215,795,
        1234,795, 1234,831, 1307,834, 1128,810, 781,879, 1053,885, 1254,921, 1285,930, 1313,909, 1377,918, 1417,921,
        1405,936, 1442,945, 1450,951, 719,939, 758,948, 837,945, 947,966, 974,957, 789,984, 834,999, 907,984, 1036,999,
        1179,993, 1234,972, 1243,987, 1257,990, 1271,990, 1296,987, 1411,987, 1251,1059, 1254,1092, 1254,1140, 1332,1059,
        1358,1071, 1369,1086
    ] },
    { x: 900, y: 150, sx: 1.845, sy: 2.53, pts: [
        137,241, 149,241, 130,258, 148,269, 124,298, 144,307, 130,316, 156,361, 165,419, 184,270, 201,270, 224,267, 231,247,
        241,255, 253,260, 231,341, 285,290, 326,232, 338,247, 359,247, 360,260, 365,278, 413,284, 419,290, 428,338, 428,346,
        379,337, 385,330, 355,341, 317,340, 332,360, 407,361, 243,437, 248,450, 177,450, 120,440, 468,331, 474,419, 487,293,
        508,284, 523,293, 543,316, 560,293, 563,335, 569,353, 523,362, 610,284, 623,297, 623,440, 670,245, 670,338, 697,290,
        714,278, 714,337, 723,328, 730,337, 730,353, 745,361, 768,370, 777,392, 773,407, 752,409, 779,311, 782,323, 788,278,
        793,240, 804,235, 821,235, 827,241, 852,241, 681,409, 817,432, 827,369, 852,392, 877,369, 869,295, 904,257, 913,440,
        899,450, 1060,237, 1073,242, 1114,260, 1094,265, 1101,284, 1029,326, 1033,354, 1073,370, 1086,374, 1059,399,
        1062,422, 1123,333, 1163,374, 1158,384, 1182,386, 1165,386, 1149,400, 1149,414, 1209,432, 1221,430, 1235,419,
        1257,416, 1269,409, 1337,272, 865,1537, 897,1556, 1024,1548, 1022,1563, 1078,1561, 1111,1556, 1146,1537, 1167,1556,
        1266,1549
    ] }
];
blocks.forEach(b => {
    for (let i = 0; i < b.pts.length; i += 2) {
        hit(b.x + b.pts[i] / b.sx, b.y + b.pts[i + 1] / b.sy);
    }
});
document.getElementById('drills').innerHTML = hits;
```
